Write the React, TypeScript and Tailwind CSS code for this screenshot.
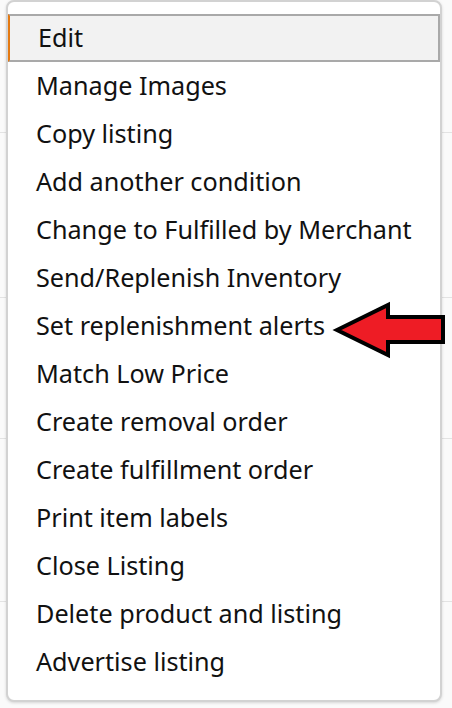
import React from "react";

const items = [
  "Edit",
  "Manage Images",
  "Copy listing",
  "Add another condition",
  "Change to Fulfilled by Merchant",
  "Send/Replenish Inventory",
  "Set replenishment alerts",
  "Match Low Price",
  "Create removal order",
  "Create fulfillment order",
  "Print item labels",
  "Close Listing",
  "Delete product and listing",
  "Advertise listing",
];

export default function App() {
  return (
    <div className="relative w-[452px] h-[708px] bg-[#fafafa] overflow-hidden" style={{ fontFamily: '"Noto Sans", "Open Sans", sans-serif' }}>
      <div className="absolute left-0 right-0 top-[132px] h-px bg-[#e3e3e3]" />
      <div className="absolute left-0 right-0 top-[297px] h-px bg-[#e3e3e3]" />
      <div className="absolute left-0 right-0 top-[438px] h-px bg-[#e3e3e3]" />
      <div className="absolute left-0 right-0 top-[601px] h-px bg-[#e3e3e3]" />
      <div className="relative ml-[6px] w-[436px] h-[702px] bg-white border-2 border-[#d2d2d2] rounded-[8px] shadow-[0_1px_3px_rgba(0,0,0,0.15)] pt-[12px] pb-[12px]">
        {items.map((t, i) => (
          <div
            key={t}
            className={
              "h-[48px] flex items-center pl-[28px] text-[25.2px] leading-none text-[#111] " +
              (i === 0 ? "bg-[#f2f2f2] border-2 border-[#a9a9a9] border-l-[#e47911] pl-[25px]" : "")
            }
          >
            <span className="-mt-[1px]">{t}</span>
          </div>
        ))}
      </div>
      <svg className="absolute left-[330px] top-[298px]" width="122" height="64" viewBox="330 298 122 64">
        <polygon
          points="337,330 388,305 388,317 443,317 443,342 388,342 388,355"
          fill="#ee1c25"
          stroke="#000"
          strokeWidth="4"
          strokeLinejoin="miter"
        />
      </svg>
    </div>
  );
}
